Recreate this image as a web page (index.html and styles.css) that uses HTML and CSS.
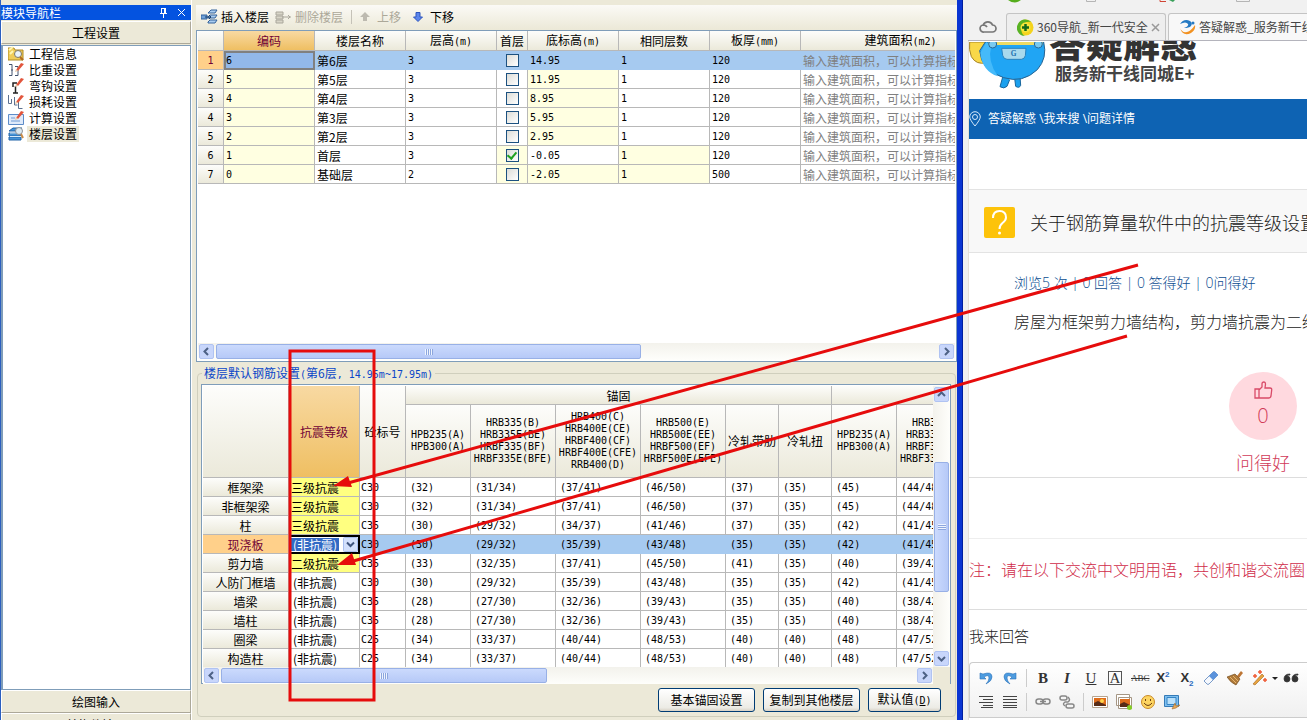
FILE: index.html
```html
<!DOCTYPE html>
<html lang="zh-CN">
<head>
<meta charset="utf-8">
<title>楼层设置</title>
<link rel="stylesheet" href="styles.css">
</head>
<body>
<div class="desktop">
  <aside class="sidebar">
    <header class="side-title"><span>模块导航栏</span>
      <svg class="side-tools" width="28" height="12" viewBox="0 0 28 12" fill="none" stroke="#fff"><path d="M2.500 1v5M5.500 1v5M6.500 1v5M2 1.500h5M1 6.500h7M4.500 7v4"/><path d="M19 2l7 7M26 2l-7 7"/></svg>
    </header>
    <button class="side-section">工程设置</button>
    <ul class="tree">
      <li><svg viewBox="0 0 16 16"><path d="M0 2h6l1 2h8v10H0z" fill="#f0cd59" stroke="#b08b25"/><path d="M1 4l4-3M2 8l3-3" stroke="#fff6b0" stroke-width="2"/><circle cx="10" cy="8" r="3.500" fill="#eaf4fb" stroke="#7d7967"/><path d="M12 11l3 3" stroke="#b26c22" stroke-width="2"/></svg><span>工程信息</span></li>
      <li><svg viewBox="0 0 16 16"><path d="M1 2.500h3v11H1M7 4.500h3v9H7M4 7v2" fill="none" stroke="#43536f"/><path d="M8 8l5-7 3 1-6 7z" fill="#e2553c"/><path d="M7 10l1-3 2 2z" fill="#e9c9a8"/></svg><span>比重设置</span></li>
      <li><svg viewBox="0 0 16 16"><path d="M5 15h5M7.500 15V8M5 9V5h4" fill="none" stroke="#222" stroke-width="1.500"/><path d="M8 7l5-7 3 1-6 7z" fill="#e2553c"/><path d="M7 9l1-3 2 2z" fill="#e9c9a8"/></svg><span>弯钩设置</span></li>
      <li><svg viewBox="0 0 16 16"><path d="M.5 1v8.500h3V5M6.500 3v8h3M10.500 8v6.500h4" fill="none" stroke="#5b7090"/><path d="M8 8l5-7 3 1-6 7z" fill="#e2553c"/><path d="M7 10l1-3 2 2z" fill="#e9c9a8"/></svg><span>损耗设置</span></li>
      <li><svg viewBox="0 0 16 16"><path d="M.5 4.500h15v10H.5z" fill="#dfeafa" stroke="#5d8cc9"/><path d="M3 8h4M3 11h9" stroke="#6f9bd4"/><path d="M8 8l5-7 3 1-6 7z" fill="#e2553c"/><path d="M7 10l1-3 2 2z" fill="#e9c9a8"/></svg><span>计算设置</span></li>
      <li class="current"><svg viewBox="0 0 16 16"><path d="M1 5l4-3h9l-3 3zM1 7h12v3H1zM1 11h12v3H1z" fill="#4795d8" stroke="#2264a8"/><path d="M2 10.500h11M2 7h10" stroke="#d5ebfb"/><circle cx="11" cy="5" r="3.500" fill="#dceaf2" stroke="#8d9196"/><path d="M13 8l2 4" stroke="#c98a45" stroke-width="2"/></svg><span>楼层设置</span></li>
    </ul>
    <button class="side-section">绘图输入</button>
    <button class="side-section last">单构件输入</button>
  </aside>

  <main class="main">
    <div class="toolbar">
      <button><svg width="17" height="16" viewBox="0 0 17 16"><path d="M8 3l2-2h6l-2 3H7zM7 8l2-2h7l-2 3H7zM7 13l2-2h7l-2 3H7z" fill="#a9cdf1" stroke="#34629b"/><path d="M0 6h6v4H0z" fill="#6fa1d8" stroke="#34629b"/><path d="M4 8h6M8 6l2 2-2 2" stroke="#173c6d" fill="none"/></svg>插入楼层</button>
      <button class="off wide" disabled><svg width="17" height="16" viewBox="0 0 17 16"><path d="M1 3h7v3H1zM1 7h7v3H1zM1 11h7v3H1z" fill="#d8d5c8" stroke="#aaa79c"/><path d="M7 8h9M13 6l2 2-2 2" stroke="#aaa79c" fill="none"/></svg>删除楼层</button>
      <i class="sep"></i>
      <button class="off" disabled><svg class="arrow" width="10" height="10" viewBox="0 0 10 10"><path d="M5 0l5 5H7v4H3V5H0z" fill="#bdbab0"/></svg>上移</button>
      <button><svg class="arrow" width="10" height="10" viewBox="0 0 10 10"><path d="M5 9.500L.5 5H3V.5h4V5h2.500z" fill="#5c86ec" stroke="#2c55bd"/></svg>下移</button>
    </div>

    <section class="pane floors">
      <div class="clip">
      <table class="grid floor-table">
        <colgroup><col class="w26"><col class="w91"><col class="w91"><col class="w91"><col class="w31"><col class="w91"><col class="w91"><col class="w91"><col class="w200"></colgroup>
        <thead><tr><th></th><th class="hot">编码</th><th>楼层名称</th><th>层高<span class="m">(m)</span></th><th>首层</th><th>底标高<span class="m">(m)</span></th><th>相同层数</th><th>板厚<span class="m">(mm)</span></th><th>建筑面积<span class="m">(m2)</span></th></tr></thead>
        <tbody>
          <tr class="picked"><th class="m">1</th><td class="m cursor">6</td><td>第6层</td><td class="m">3</td><td class="c"><input type="checkbox" aria-label="首层 1"></td><td class="m">14.95</td><td class="m">1</td><td class="m">120</td><td class="hint">输入建筑面积，可以计算指标</td></tr>
          <tr><th class="m">2</th><td class="m y">5</td><td>第5层</td><td class="m">3</td><td class="c"><input type="checkbox" aria-label="首层 2"></td><td class="m y">11.95</td><td class="m">1</td><td class="m">120</td><td class="hint">输入建筑面积，可以计算指标</td></tr>
          <tr><th class="m">3</th><td class="m y">4</td><td>第4层</td><td class="m">3</td><td class="c"><input type="checkbox" aria-label="首层 3"></td><td class="m y">8.95</td><td class="m">1</td><td class="m">120</td><td class="hint">输入建筑面积，可以计算指标</td></tr>
          <tr><th class="m">4</th><td class="m y">3</td><td>第3层</td><td class="m">3</td><td class="c"><input type="checkbox" aria-label="首层 4"></td><td class="m y">5.95</td><td class="m">1</td><td class="m">120</td><td class="hint">输入建筑面积，可以计算指标</td></tr>
          <tr><th class="m">5</th><td class="m y">2</td><td>第2层</td><td class="m">3</td><td class="c"><input type="checkbox" aria-label="首层 5"></td><td class="m y">2.95</td><td class="m">1</td><td class="m">120</td><td class="hint">输入建筑面积，可以计算指标</td></tr>
          <tr><th class="m">6</th><td class="m y">1</td><td>首层</td><td class="m">3</td><td class="c y"><input type="checkbox" aria-label="首层 6" checked></td><td class="m">-0.05</td><td class="m y">1</td><td class="m">120</td><td class="hint">输入建筑面积，可以计算指标</td></tr>
          <tr><th class="m">7</th><td class="m y">0</td><td>基础层</td><td class="m">2</td><td class="c y"><input type="checkbox" aria-label="首层 7"></td><td class="m y">-2.05</td><td class="m y">1</td><td class="m">500</td><td class="hint">输入建筑面积，可以计算指标</td></tr>
        </tbody>
      </table>
      </div>
      <div class="hbar"><button aria-label="向左"><svg viewBox="0 0 9 9"><path d="M6 1L2.500 4.500 6 8"/></svg></button><span class="track"><span class="thumb wide-thumb"></span></span><button aria-label="向右"><svg viewBox="0 0 9 9"><path d="M3 1l3.500 3.500L3 8"/></svg></button></div>
    </section>

    <fieldset class="rebar">
      <legend>楼层默认钢筋设置<span class="m">(</span>第6层<span class="m">, 14.95m~17.95m)</span></legend>
      <div class="pane rebar-pane">
        <div class="clip">
        <table class="grid rebar-table">
          <colgroup><col class="w86"><col class="w71"><col class="w46"><col class="w65"><col class="w85"><col class="w85"><col class="w85"><col class="w53"><col class="w53"><col class="w65"><col class="w85"></colgroup>
          <thead>
            <tr><th rowspan="2"></th><th rowspan="2" class="hot">抗震等级</th><th rowspan="2">砼标号</th><th colspan="6">锚固</th><th colspan="2"></th></tr>
            <tr class="tall"><th class="m">HPB235(A)<br>HPB300(A)</th><th class="m">HRB335(B)<br>HRB335E(BE)<br>HRBF335(BF)<br>HRBF335E(BFE)</th><th class="m">HRB400(C)<br>HRB400E(CE)<br>HRBF400(CF)<br>HRBF400E(CFE)<br>RRB400(D)</th><th class="m">HRB500(E)<br>HRB500E(EE)<br>HRBF500(EF)<br>HRBF500E(EFE)</th><th>冷轧带肋</th><th>冷轧扭</th><th class="m">HPB235(A)<br>HPB300(A)</th><th class="m">HRB335(B)<br>HRB335E(BE)<br>HRBF335(BF)<br>HRBF335E(BFE)</th></tr>
          </thead>
          <tbody>
            <tr><th>框架梁</th><td class="lv">三级抗震</td><td>C30</td><td>(32)</td><td>(31/34)</td><td>(37/41)</td><td>(46/50)</td><td>(37)</td><td>(35)</td><td>(45)</td><td>(44/48)</td></tr>
            <tr><th>非框架梁</th><td class="lv">三级抗震</td><td>C30</td><td>(32)</td><td>(31/34)</td><td>(37/41)</td><td>(46/50)</td><td>(37)</td><td>(35)</td><td>(45)</td><td>(44/48)</td></tr>
            <tr><th>柱</th><td class="lv">三级抗震</td><td>C35</td><td>(30)</td><td>(29/32)</td><td>(34/37)</td><td>(41/46)</td><td>(37)</td><td>(35)</td><td>(42)</td><td>(41/45)</td></tr>
            <tr class="picked"><th>现浇板</th><td class="editing"><div class="combo"><select aria-label="现浇板抗震等级"><option>(非抗震)</option><option>二级抗震</option><option>三级抗震</option></select><svg viewBox="0 0 15 15"><rect x=".5" y=".5" width="14" height="14" rx="1" fill="#d3e0fc" stroke="#a9bff0"/><path d="M4 5.500L7.500 9 11 5.500" fill="none" stroke="#40557f" stroke-width="2"/></svg></div></td><td>C30</td><td>(30)</td><td>(29/32)</td><td>(35/39)</td><td>(43/48)</td><td>(35)</td><td>(35)</td><td>(42)</td><td>(41/45)</td></tr>
            <tr><th>剪力墙</th><td class="lv">二级抗震</td><td>C35</td><td>(33)</td><td>(32/35)</td><td>(37/41)</td><td>(45/50)</td><td>(41)</td><td>(35)</td><td>(40)</td><td>(39/42)</td></tr>
            <tr><th>人防门框墙</th><td class="no">(非抗震)</td><td>C30</td><td>(30)</td><td>(29/32)</td><td>(35/39)</td><td>(43/48)</td><td>(35)</td><td>(35)</td><td>(42)</td><td>(41/45)</td></tr>
            <tr><th>墙梁</th><td class="no">(非抗震)</td><td>C35</td><td>(28)</td><td>(27/30)</td><td>(32/36)</td><td>(39/43)</td><td>(35)</td><td>(35)</td><td>(40)</td><td>(38/42)</td></tr>
            <tr><th>墙柱</th><td class="no">(非抗震)</td><td>C35</td><td>(28)</td><td>(27/30)</td><td>(32/36)</td><td>(39/43)</td><td>(35)</td><td>(35)</td><td>(40)</td><td>(38/42)</td></tr>
            <tr><th>圈梁</th><td class="no">(非抗震)</td><td>C25</td><td>(34)</td><td>(33/37)</td><td>(40/44)</td><td>(48/53)</td><td>(40)</td><td>(40)</td><td>(48)</td><td>(47/52)</td></tr>
            <tr><th>构造柱</th><td class="no">(非抗震)</td><td>C25</td><td>(34)</td><td>(33/37)</td><td>(40/44)</td><td>(48/53)</td><td>(40)</td><td>(40)</td><td>(48)</td><td>(47/52)</td></tr>
          </tbody>
        </table>
        </div>
        <div class="vbar"><button aria-label="向上"><svg viewBox="0 0 9 9"><path d="M1 6l3.500-3.500L8 6"/></svg></button><span class="track"><span class="thumb"></span></span><button aria-label="向下"><svg viewBox="0 0 9 9"><path d="M1 3l3.500 3.500L8 3"/></svg></button></div>
        <div class="hbar"><button aria-label="向左"><svg viewBox="0 0 9 9"><path d="M6 1L2.500 4.500 6 8"/></svg></button><span class="track"><span class="thumb half-thumb"></span></span><button aria-label="向右"><svg viewBox="0 0 9 9"><path d="M3 1l3.500 3.500L3 8"/></svg></button></div>
        <i class="corner"></i>
      </div>
      <div class="actions"><button>基本锚固设置</button><button>复制到其他楼层</button><button class="short">默认值<span class="m">(<u>D</u>)</span></button></div>
    </fieldset>
  </main>

  <section class="browser">
    <nav class="tabs">
      <svg class="cut-icons" viewBox="0 0 300 4"><path d="M29 0h13q-6 5-13 0" fill="#55ad1c"/><path d="M107.500 0v1.500h9V0M257.500 0v1.500h13V0" fill="none" stroke="#b5b5b5"/><path d="M181 0v1.500h6" stroke="#d04535" fill="none"/><path d="M190 0l4 2 2-2" fill="#3aa05a"/></svg>
      <div class="tab-row">
      <svg class="cloud" width="18" height="15" viewBox="0 0 18 15"><path d="M5 13a3.500 3.500 0 0 1-.8-7A5 5 0 0 1 13.500 6a3.500 3.500 0 0 1 0 7zM4 6q3 0 4 2" fill="none" stroke="#777" stroke-width="1.700"/></svg>
      <a class="tab" href="#nav"><svg width="17" height="17" viewBox="0 0 17 17"><circle cx="8.500" cy="8.500" r="8" fill="#f4d31d"/><path d="M1 5a8 8 0 0 1 13-2q-7-1-9 5t3 9A8 8 0 0 1 1 5" fill="#58b224"/><circle cx="8.500" cy="8.500" r="5" fill="#f7e53a"/><path d="M8.500 5v7M5 8.500h7" stroke="#15691b" stroke-width="2.500"/></svg><span>360导航_新一代安全</span><svg width="9" height="9" viewBox="0 0 9 9"><path d="M1 1l7 7M8 1L1 8" stroke="#999" stroke-width="1.500"/></svg></a>
      <a class="tab on" href="#qa"><svg width="17" height="16" viewBox="0 0 17 16"><path d="M1 5Q5-1 11 2q3 2 1 5-2 2-7 2 5-2 4-4-2-3-8 0" fill="#2479c3"/><path d="M1 9q2 5 7 4 4-1 8-7 1 5-4 8-8 4-11-5" fill="#f29222"/><circle cx="14" cy="4" r="1.500" fill="#2479c3"/></svg><span>答疑解惑_服务新干线</span></a>
      </div>
    </nav>
    <div class="page">
      <header class="brand">
        <svg width="80" height="49" viewBox="33 129 240 147"><path d="M35 129h50v62q-30 8-45-18-8-20-5-44" fill="#f9d849" stroke="#a58327" stroke-width="3"/><path d="M138 220l-12 43q12 8 21-1l8-20M170 238l3 24q11 7 15-3l-2-26" fill="#1aa0ee" stroke="#17659c" stroke-width="3"/><path d="M82 129h175q12 48-19 83-44 42-101 24-68-22-72-81z" fill="#20a5f4" stroke="#286391" stroke-width="3"/><path d="M85 129l-18 32q5 55 53 71-33-45-20-92z" fill="#45bafa"/><path d="M92 129h162v9H92z" fill="#eddb65"/><circle cx="104" cy="135" r="12" fill="#7acaf0" stroke="#276898" stroke-width="3"/><circle cx="241" cy="135" r="12" fill="#7acaf0" stroke="#276898" stroke-width="3"/><path d="M131 148h73l-2 22q-2 10-12 11h-43q-11-1-13-12z" fill="#a8d9ed" stroke="#2a83bd" stroke-width="3"/><text x="158" y="171" class="badge-letter">G</text></svg>
        <div class="brand-copy"><h1>答疑解惑</h1><p>服务新干线同城E+</p></div>
      </header>
      <div class="crumbs"><svg width="12" height="16" viewBox="0 0 12 16"><path d="M6 15Q1 9 .7 6A5.300 5.300 0 0 1 11.300 6Q11 9 6 15z" fill="none" stroke="#d6e8fa"/><circle cx="6" cy="6" r="2.500" fill="none" stroke="#d6e8fa"/></svg><a href="#qa">答疑解惑</a>&nbsp;\<a href="#ask">我来搜</a>&nbsp;\<a href="#detail">问题详情</a></div>
      <div class="question"><svg width="31" height="31" viewBox="0 0 31 31"><rect width="31" height="31" rx="2" fill="#fdc30a"/><path d="M9 11q0-7 6.500-7t6.500 6.500q0 3-3.500 5.500-3 2.500-3 6" fill="none" stroke="#fff" stroke-width="2"/><circle cx="15.500" cy="26" r="1.500" fill="#fff"/></svg><h2>关于钢筋算量软件中的抗震等级设置</h2></div>
      <article class="detail">
        <p class="stats">浏览5 次 | 0 回答 | 0 答得好 | 0问得好</p>
        <p class="body-text">房屋为框架剪力墙结构，剪力墙抗震为二级</p>
        <div class="vote"><button><svg width="19" height="19" viewBox="0 0 19 19" fill="none" stroke="#d94b68" stroke-width="1.300"><path d="M1 8h4v9H1zM5 9l3-3V3q0-2 2-2 1.500 0 1.500 2L11 7h5q2 0 1.700 2L17 15q-.5 2-2 2H5"/></svg><span>0</span></button><em>问得好</em></div>
      </article>
      <div class="blank"></div>
      <p class="notice">注：请在以下交流中文明用语，共创和谐交流圈</p>
      <h3 class="reply">我来回答</h3>
      <div class="editor">
        <div class="tools">
          <button aria-label="撤销"><svg viewBox="0 0 16 16"><path d="M2 3v6h6L6 7q5-3 5 1 0 3-3 6 6-3 6-7 0-6-9-3z" fill="#4d9ce0" stroke="#2e72b8" stroke-width=".6"/></svg></button>
          <button aria-label="重做"><svg viewBox="0 0 16 16"><path d="M14 3v6H8l2-2Q5 4 5 8q0 3 3 6-6-3-6-7 0-6 9-3z" fill="#4d9ce0" stroke="#2e72b8" stroke-width=".6"/></svg></button>
          <i></i>
          <button class="serif"><b>B</b></button><button class="serif"><b><em>I</em></b></button><button class="serif"><u>U</u></button><button class="serif boxed"><span>A</span></button><button class="abc"><s>ABC</s></button>
          <button class="script">X<sup>2</sup></button><button class="script">X<sub>2</sub></button>
          <button aria-label="清除格式"><svg viewBox="0 0 16 16"><path d="M1 11l9-9q1-1 2 0l3 3-9 9q-1 1-2 0z" fill="#f5f8fd" stroke="#7b9cc9"/><path d="M6 6l4-4q1-1 2 0l3 3-5 5z" fill="#5b93dc"/></svg></button>
          <button aria-label="格式刷"><svg viewBox="0 0 16 16"><path d="M10 6l4-5 2 2-4 5z" fill="#bd7635"/><path d="M0 7l8-3 5 5-4 6q-5-2-9-8z" fill="#b07a3a" stroke="#765022" stroke-width=".7"/><path d="M3 7l6 6M6 6l5 5" stroke="#e7b66d"/></svg></button>
          <button aria-label="自动排版"><svg viewBox="0 0 16 16"><path d="M2 14l9-10 2 2-9 9z" fill="#e7a33d" stroke="#a36723" stroke-width=".6"/><path d="M2 6h4M4 4v4M7 2h4M9 0v4M12 10h4M14 8v4" stroke="#ef5b36" stroke-width="1.500"/></svg></button>
          <span class="caret"></span>
          <button aria-label="引用"><svg viewBox="0 0 16 16"><path d="M7 4Q1 4 1 9q0 3 3 3t3-3-3-3q1-1 3-1zM15 4Q9 4 9 9q0 3 3 3t3-3-3-3q1-1 3-1z" fill="#333" stroke="#333" stroke-width=".7"/></svg></button>
        </div>
        <div class="tools second">
          <button aria-label="右对齐"><svg viewBox="0 0 16 16"><path d="M1 2.500h14M5 5.500h10M1 8.500h14M5 11.500h10M3 13.500h12" stroke="#444"/></svg></button>
          <button aria-label="两端对齐"><svg viewBox="0 0 16 16"><path d="M1 2.500h14M1 5.500h14M1 8.500h14M1 11.500h14M1 13.500h14" stroke="#444"/></svg></button>
          <i></i>
          <button aria-label="链接"><svg viewBox="0 0 16 16" fill="none" stroke="#888" stroke-width="1.500"><rect x="1" y="5" width="7" height="5" rx="2.500"/><rect x="8" y="5" width="7" height="5" rx="2.500"/><path d="M5 7.500h6"/></svg></button>
          <button aria-label="取消链接"><svg viewBox="0 0 16 16" fill="none" stroke="#888" stroke-width="1.500"><rect x="1" y="2" width="7" height="4" rx="2"/><rect x="7" y="10" width="8" height="4" rx="2"/><path d="M9 3q3 3 0 5H6q-3 2 0 4"/></svg></button>
          <i></i>
          <button aria-label="图片"><svg viewBox="0 0 16 16"><path d="M.5 2.500h15v11H.5z" fill="#fff" stroke="#b7a48f"/><path d="M2 4h12v8H2z" fill="#df6c1b"/><path d="M2 9l4-2 8 4v1H2z" fill="#582b16"/><circle cx="10" cy="7" r="2" fill="#ffd34b"/></svg></button>
          <button aria-label="多图"><svg viewBox="0 0 16 16"><path d="M.5.500h13v11H.5zM2.500 3.500h13v11h-13z" fill="#fff" stroke="#a59684"/><path d="M4 5h10v8H4z" fill="#df6c1b"/><path d="M4 10l4-2 6 3v2H4z" fill="#582b16"/><circle cx="13.500" cy="13.500" r="2.500" fill="#84cd26"/></svg></button>
          <button aria-label="表情"><svg viewBox="0 0 16 16"><circle cx="8" cy="8" r="6.500" fill="#fcd461" stroke="#c98a28"/><path d="M5.500 5v2M10.500 5v2M4 9q4 5 8 0" fill="none" stroke="#704012"/></svg></button>
          <button aria-label="截图"><svg viewBox="0 0 16 16"><path d="M.5 1.500h14v11H.5z" fill="#7ebff0" stroke="#357bb7"/><path d="M3 3.500h9v7H3z" fill="#b9e0fa" stroke="#3684c4"/><path d="M8 15l3-6 1 3 4-1-4 3z" fill="#e5a657" stroke="#a26b2c" stroke-width=".6"/></svg></button>
        </div>
      </div>
    </div>
  </section>

  <svg class="marks" width="1307" height="720" viewBox="0 0 1307 720" fill="none" stroke="#e60c0c" stroke-width="3"><rect x="290" y="351" width="84" height="349"/><path d="M1138 265L348 483M1127 336L350 562"/><path d="M333 486l15-10 4 11zM337 565l15-12 4 12z" fill="#e60c0c" stroke="none"/></svg>
</div>
</body>
</html>
```
FILE: styles.css
```css
* { box-sizing: border-box; }
body { margin: 0; background: #ece9d8; color: #000; font: 12px/18px "Noto Sans CJK SC", sans-serif; overflow: hidden; }
button { font: inherit; color: inherit; margin: 0; padding: 0; border: 0; background: none; }
h1, h2, h3, p, ul { margin: 0; padding: 0; }
a { color: inherit; text-decoration: none; }
svg { flex: none; }
.m { font-family: "DejaVu Sans Mono", monospace; font-size: 10px; }

.desktop { display: grid; grid-template-columns: 192px 1fr 345px; height: 100vh; overflow: hidden; position: relative; }

/* module navigator */
.sidebar { display: flex; flex-direction: column; min-height: 0; overflow: hidden; padding-top: 5px; border-left: 1px solid #2b5fc0; border-right: 1px solid #fff; }
.side-title { display: flex; justify-content: space-between; align-items: center; flex: none; height: 15px; line-height: 15px; background: #0453e0; color: #fff; padding-right: 4px; }
.side-section { flex: none; height: 23px; border: 1px solid #aca899; border-top-color: #fff; border-left-color: #fff; background: #ece9d8; text-align: center; }
.side-title + .side-section { margin: 1px 0; }
.side-section.last { margin-bottom: -16px; }
.tree { flex: 1; list-style: none; background: #fff; border: 1px solid #7f9db9; border-left-width: 2px; }
.tree li { display: flex; align-items: center; height: 16px; line-height: 16px; padding-left: 5px; gap: 3px; }
.tree svg { width: 16px; height: 16px; }
.tree span { padding: 0 2px; }
.tree .current span { background: #ece9d8; }

/* editor column */
.main { display: flex; flex-direction: column; min-width: 0; min-height: 0; padding: 5px 0 3px 4px; border-right: 5px solid #0a35d2; }
.toolbar { display: flex; align-items: center; gap: 12px; flex: none; height: 24px; padding-left: 5px; background: linear-gradient(#fbfaf6, #ece9d8); }
.toolbar button { display: flex; align-items: center; gap: 3px; }
.toolbar button .arrow { margin-right: 4px; }
.toolbar .off { color: #aca899; }
.toolbar .wide { margin-left: -6px; }
.sep { width: 1px; height: 14px; background: #c5c2b8; margin: 0 -4px; }
.pane { background: #fff; border: 1px solid #7f9db9; padding: 1px; }
.clip { min-width: 0; min-height: 0; overflow: hidden; }
.floors { display: flex; flex-direction: column; flex: 1; min-height: 0; margin-top: 1px; padding-top: 0; }
.floors .clip { flex: 1; }

.grid { table-layout: fixed; border-collapse: separate; border-spacing: 0; }
.w26 { width: 26px; } .w31 { width: 31px; } .w46 { width: 46px; } .w53 { width: 53px; } .w65 { width: 65px; }
.w71 { width: 71px; } .w85 { width: 85px; } .w86 { width: 86px; } .w91 { width: 91px; } .w200 { width: 200px; }
.floor-table { width: 803px; }
.rebar-table { width: 779px; }
.grid th, .grid td { height: 19px; padding: 0 0 0 2px; line-height: 17px; border: solid #b8b8b8; border-width: 0 1px 1px 0; white-space: nowrap; overflow: hidden; text-align: left; font-weight: 400; }
.grid th { padding: 0; text-align: center; background: linear-gradient(#fdfdfb, #ebe9da); }
.floor-table thead th { height: 20px; }
.grid th.hot { background: linear-gradient(#f8d9a2, #efbf62); color: #700035; }
.grid .y { background: #ffffe1; }
.grid .picked td { background: #a6caf0; border-color: #a6caf0; }
.grid .picked th { background: #ffd08a; color: #700035; }
.grid .picked .cursor { background: #92b8ea; border: 2px solid #808080; padding-left: 0; line-height: 15px; }
.grid .hint { color: #808080; }
.grid .c { padding: 0; text-align: center; }
.grid input { appearance: none; display: block; width: 13px; height: 13px; margin: 0 auto; border: 1px solid #1c5180; background: linear-gradient(135deg, #dcdcd7, #fff); }
.grid input:checked::after { content: ""; display: block; width: 4px; height: 7px; margin: 0 auto; border: solid #21a121; border-width: 0 2px 2px 0; transform: rotate(40deg); }

/* scroll bars */
.hbar { display: flex; flex: none; height: 17px; gap: 2px; padding: 1px; background: linear-gradient(#f3f2ec, #fefefb); }
.vbar { display: flex; flex-direction: column; gap: 2px; padding: 1px; background: linear-gradient(90deg, #f3f2ec, #fefefb); }
.hbar button, .vbar button { flex: none; display: grid; place-items: center; width: 15px; height: 15px; border: 1px solid #b0c3f2; border-radius: 2px; background: #c8d6fb; }
.hbar button svg, .vbar button svg { width: 9px; height: 9px; fill: none; stroke: #4d6185; stroke-width: 2; }
.track { flex: 1; display: flex; }
.thumb { display: grid; place-items: center; border: 1px solid #98b0e6; border-radius: 2px; background: linear-gradient(#cbdafd, #b6c9f7); }
.thumb::after { content: ""; width: 8px; height: 6px; background: repeating-linear-gradient(90deg, #eef4fe 0 1px, #8ca6de 1px 2px); }
.wide-thumb { width: 59%; }
.half-thumb { width: 47%; }
.vbar .track { flex-direction: column; justify-content: flex-end; padding-bottom: 57px; }
.vbar .thumb { height: 130px; background: linear-gradient(90deg, #cbdafd, #b6c9f7); }
.vbar .thumb::after { background: repeating-linear-gradient(#eef4fe 0 1px, #8ca6de 1px 2px); }

/* rebar settings */
.rebar { flex: none; min-width: 0; margin: 4px 1px 0; padding: 4px 4px 4px 3px; border: 1px solid #d0cfbd; border-radius: 4px; }
.rebar legend { height: 14px; line-height: 14px; padding: 0 2px; margin-left: 1px; color: #0a46c8; }
.rebar-pane { display: grid; grid-template-columns: minmax(0, 1fr) 17px; grid-template-rows: 281px 17px; padding: 1px 0 0 1px; height: 300px; }
.corner { background: #ece9d8; }
.rebar-table .tall th { height: 73px; line-height: 12px; }
.rebar-table td { padding-left: 4px; font-family: "DejaVu Sans Mono", monospace; font-size: 10px; }
.rebar-table td:nth-child(2) { padding-left: 2px; font-family: inherit; font-size: 12px; }
.rebar-table td.no:nth-child(2) { padding-left: 4px; }
.rebar-table td:nth-child(3) { padding-left: 1px; }
.grid .lv { background: #ffff80; }
.grid .picked td.editing { padding: 0; border: 2px solid #000; background: #fff; }
.combo { display: flex; align-items: center; justify-content: space-between; height: 15px; }
.combo select { appearance: none; width: 48px; height: 13px; border: 0; padding: 0 2px; margin: 0; background: #316ac5; color: #fff; font: 12px/13px "Noto Sans CJK SC", sans-serif; }
.combo svg { width: 15px; height: 15px; }
.actions { display: flex; justify-content: flex-end; gap: 8px; margin-top: 4px; padding-right: 10px; }
.actions button { width: 97px; height: 24px; line-height: 20px; border: 1px solid #003c74; border-radius: 3px; background: linear-gradient(#fff, #ecebe5 85%, #d8d2c5); }
.actions .short { width: 73px; }

/* browser window */
.browser { display: flex; flex-direction: column; min-width: 0; min-height: 0; overflow: hidden; background: #f0f0f0; border-left: 1px solid #001ea0; }
.tabs { display: flex; flex: none; flex-direction: column; justify-content: space-between; height: 41px; overflow: hidden; border-bottom: 1px solid #b4b4bc; background: #f1f1f1; margin-left: 5px; padding-left: 11px; }
.cut-icons { width: 300px; height: 4px; }
.tab-row { display: flex; align-items: end; gap: 2px; }
.cloud { margin: 0 7px 6px 0; }
.tab { flex: none; display: flex; align-items: center; gap: 3px; height: 27px; padding: 0 10px; border: 1px solid #c4c4c4; border-bottom: 0; border-radius: 3px 3px 0 0; background: #eee; color: #444; white-space: nowrap; width: 160px; }
.tab.on { background: #f8f8f8; }
.page { flex: 1; min-height: 0; overflow: hidden; margin-left: 5px; background: #fff; border-left: 1px solid #e5e0d8; color: #222; font-family: "Open Sans", "Noto Sans CJK SC", sans-serif; }
.brand { display: flex; height: 58px; padding-top: 1px; overflow: hidden; }
.badge-letter { font: bold 22px "Liberation Serif", serif; fill: #1b6fae; }
.brand-copy { margin-top: -21px; color: #333; white-space: nowrap; font-family: "Noto Sans CJK SC", sans-serif; }
.brand h1 { font-size: 37px; line-height: 42px; font-weight: 900; }
.brand p { font-size: 17px; line-height: 19px; font-weight: 700; color: #444; padding-left: 6px; }
.crumbs { display: flex; align-items: center; height: 40px; background: #0e63b3; color: #fff; white-space: nowrap; }
.crumbs svg { margin-right: 7px; }
.question { display: flex; align-items: center; gap: 15px; margin-top: 50px; height: 64px; padding: 3px 0 0 15px; border: solid #e3e3e3; border-width: 1px 0; background: #f8f8f8; white-space: nowrap; }
.question h2 { font-size: 18px; line-height: 24px; font-weight: 300; }
.detail { height: 225px; padding: 19px 0 0 45px; border-bottom: 1px solid #ddd; white-space: nowrap; }
.stats { font-size: 14px; line-height: 22px; font-weight: 300; color: #0a4c90; }
.body-text { margin-top: 16px; font-size: 16px; line-height: 24px; font-weight: 300; }
.vote { display: flex; flex-direction: column; align-items: center; width: 68px; margin: 38px 10px 0 auto; color: #d13a58; font-weight: 300; }
.vote button { display: flex; flex-direction: column; align-items: center; width: 68px; height: 68px; padding-top: 9px; border-radius: 50%; background: #ffd9df; font-size: 20px; line-height: 32px; }
.vote em { margin-top: 10px; font-size: 18px; line-height: 26px; font-style: normal; }
.blank { height: 61px; border-bottom: 1px solid #eee; }
.notice { height: 71px; border-bottom: 1px solid #ddd; font-size: 16px; line-height: 62px; font-weight: 300; color: #d02c4a; white-space: nowrap; }
.reply { font-size: 15px; line-height: 52px; font-weight: 300; }
.editor { height: 56px; padding: 3px 8px; border: 1px solid #ccc; border-right: 0; border-radius: 4px 0 0 0; background: linear-gradient(#fff, #f0f0f0); overflow: hidden; }
.tools { display: flex; align-items: center; height: 24px; gap: 8px; color: #333; }
.tools button { flex: none; display: grid; place-items: center; width: 16px; height: 20px; line-height: 20px; }
.tools svg { width: 16px; height: 16px; }
.tools i { width: 1px; height: 18px; background: #ccc; }
.tools .serif { font: 15px/20px "Liberation Serif", serif; }
.boxed span { width: 14px; height: 14px; border: 1px solid #555; line-height: 12px; }
.tools .abc { font: 9px/20px "Liberation Serif", serif; }
.tools .script { display: block; font: bold 13px/20px "Liberation Sans", sans-serif; white-space: nowrap; }
.script sup, .script sub { font-size: 8px; line-height: 0; color: #2b6ac0; }
.caret { border: 3px solid transparent; border-top-color: #222; border-bottom: 0; margin: 0 -3px; }

/* drawn annotations above both windows */
.marks { position: absolute; left: 0; top: 0; pointer-events: none; }
```
